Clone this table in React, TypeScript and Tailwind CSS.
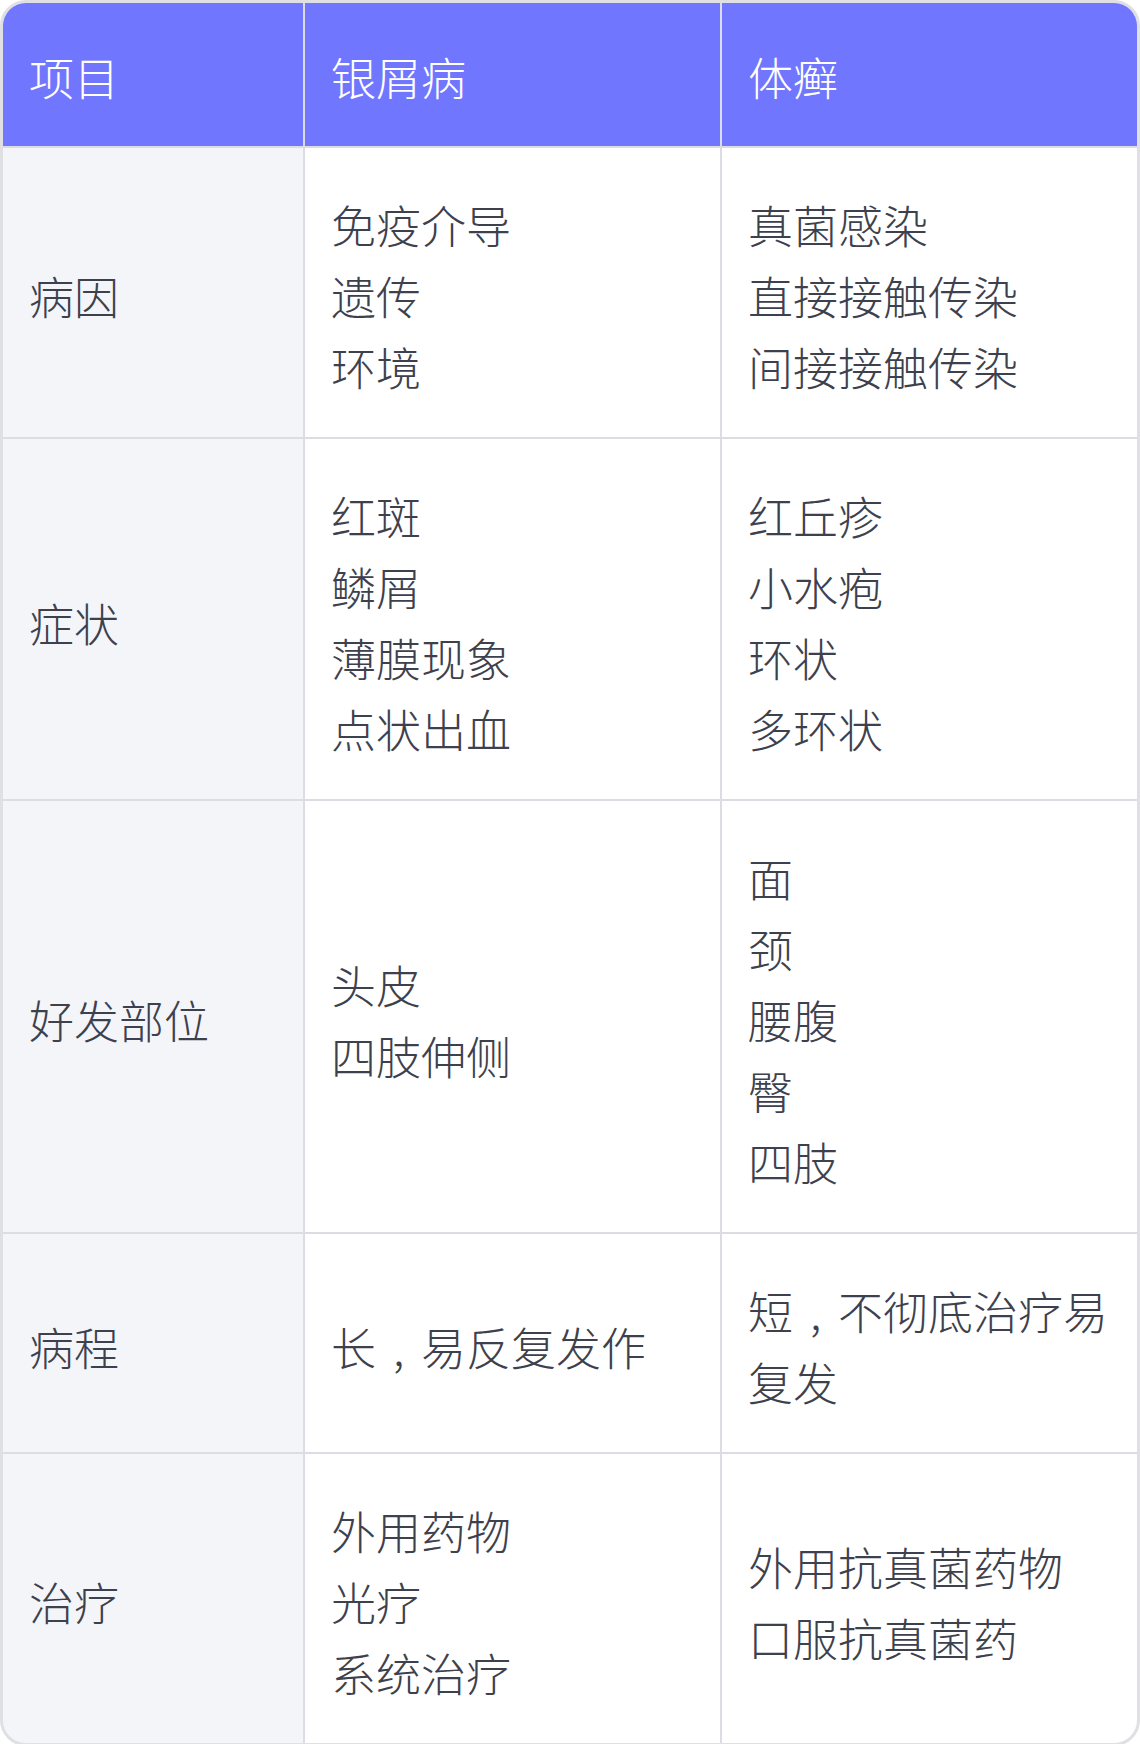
import { Fragment } from "react";

const rows: { label: string; a: string[]; b: string[] }[] = [
  { label: "病因", a: ["免疫介导", "遗传", "环境"], b: ["真菌感染", "直接接触传染", "间接接触传染"] },
  { label: "症状", a: ["红斑", "鳞屑", "薄膜现象", "点状出血"], b: ["红丘疹", "小水疱", "环状", "多环状"] },
  { label: "好发部位", a: ["头皮", "四肢伸侧"], b: ["面", "颈", "腰腹", "臀", "四肢"] },
  { label: "病程", a: ["长，易反复发作"], b: ["短，不彻底治疗易复发"] },
  { label: "治疗", a: ["外用药物", "光疗", "系统治疗"], b: ["外用抗真菌药物", "口服抗真菌药"] },
];

// the reference sets the full-width comma low and centred in its box
function Line({ text }: { text: string }) {
  const parts = text.split("，");
  return (
    <div>
      {parts.map((p, i) => (
        <Fragment key={i}>
          {i > 0 && <span className="inline-block w-[1em] text-center">,</span>}
          {p}
        </Fragment>
      ))}
    </div>
  );
}

function Cell({ lines, first }: { lines: string[]; first?: boolean }) {
  return (
    <div className={`flex flex-col justify-center px-[26px] pt-[41px] pb-[35px] ${first ? "bg-[#f4f5f9]" : "bg-white"}`}>
      {lines.map((l) => (
        <Line key={l} text={l} />
      ))}
    </div>
  );
}

export default function App() {
  return (
    <div className="w-[1140px] bg-white">
      <div
        className="overflow-hidden rounded-[26px] border-[3px] border-[#dfdfe4] text-[45px] font-light leading-[71px] text-[#3d414d]"
        style={{ fontFamily: '"Noto Sans CJK SC", "Noto Sans", sans-serif' }}
      >
        <div className="grid grid-cols-[300px_1fr_1fr] gap-[2px] bg-[#dcdde2]">
          {["项目", "银屑病", "体癣"].map((h) => (
            <div key={h} className="bg-[#7176ff] px-[26px] pt-[38px] pb-[34px] text-white">
              {h}
            </div>
          ))}
          {rows.map((r) => (
            <div key={r.label} className="contents">
              <Cell lines={[r.label]} first />
              <Cell lines={r.a} />
              <Cell lines={r.b} />
            </div>
          ))}
        </div>
      </div>
    </div>
  );
}
